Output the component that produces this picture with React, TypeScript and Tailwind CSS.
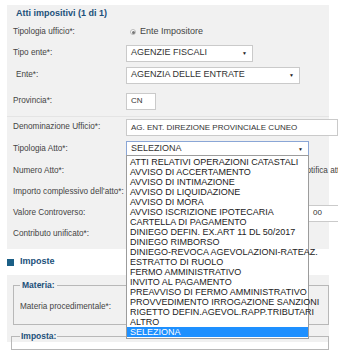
const tipologie = [
  'ATTI RELATIVI OPERAZIONI CATASTALI',
  'AVVISO DI ACCERTAMENTO',
  'AVVISO DI INTIMAZIONE',
  'AVVISO DI LIQUIDAZIONE',
  'AVVISO DI MORA',
  'AVVISO ISCRIZIONE IPOTECARIA',
  'CARTELLA DI PAGAMENTO',
  'DINIEGO DEFIN. EX.ART 11 DL 50/2017',
  'DINIEGO RIMBORSO',
  'DINIEGO-REVOCA AGEVOLAZIONI-RATEAZ.',
  'ESTRATTO DI RUOLO',
  'FERMO AMMINISTRATIVO',
  'INVITO AL PAGAMENTO',
  'PREAVVISO DI FERMO AMMINISTRATIVO',
  'PROVVEDIMENTO IRROGAZIONE SANZIONI',
  'RIGETTO DEFIN.AGEVOL.RAPP.TRIBUTARI',
  'ALTRO',
  'SELEZIONA',
]

function Row({
  label,
  h,
  children,
}: {
  label: string
  h: string
  children?: React.ReactNode
}) {
  return (
    <div className={`flex items-center whitespace-nowrap ${h}`}>
      <div className="w-[119px] shrink-0 pl-[6px]">{label}</div>
      {children}
    </div>
  )
}

function Select({ value, w, focus }: { value: string; w: string; focus?: boolean }) {
  return (
    <div
      className={`relative flex h-[17px] shrink-0 items-center border bg-white pl-[4px] text-[9px] text-[#333] ${w} ${
        focus ? 'border-[#8aa6d6]' : 'border-[#cacaca]'
      }`}
    >
      {value}
      <span className="absolute right-[5px] top-[5px] text-[5px] leading-none text-[#222]">▼</span>
    </div>
  )
}

function Input({ value, w }: { value?: string; w: string }) {
  return (
    <div
      className={`flex h-[17px] shrink-0 items-center border border-[#cacaca] bg-white pl-[4px] text-[8px] text-[#333] ${w}`}
    >
      {value}
    </div>
  )
}

export default function App() {
  return (
    <div className="relative h-[356px] w-[338px] overflow-hidden bg-white font-['Liberation_Sans',Arial,sans-serif] text-[8.2px] text-[#444]">
      <div className="ml-[7px] mt-[5px] w-[322px] bg-[#f1f1f1] pb-[5px]">
        <div className="flex h-[17px] items-center pl-[9px] text-[9px] font-bold text-[#21507a]">
          Atti impositivi (1 di 1)
        </div>
        <Row label="Tipologia ufficio*:" h="h-[20px]">
          <div className="ml-[4px] flex items-center gap-[4px] text-[9px]">
            <span className="flex h-[6px] w-[6px] items-center justify-center rounded-full border border-[#bbb] bg-white">
              <span className="h-[3px] w-[3px] rounded-full bg-[#777]" />
            </span>
            Ente Impositore
          </div>
        </Row>
        <Row label="Tipo ente*:" h="h-[22px]">
          <Select value="AGENZIE FISCALI" w="w-[127px]" />
        </Row>
        <Row label="" h="h-[22px]">
          <div className="absolute left-[16px]">Ente*:</div>
          <Select value="AGENZIA DELLE ENTRATE" w="w-[174px]" />
        </Row>
        <Row label="Provincia*:" h="h-[30px]">
          <Input value="CN" w="w-[30px]" />
        </Row>
        <div className="border-t border-[#e4e4e4]" />
        <Row label="Denominazione Ufficio*:" h="h-[21px]">
          <Input value="AG. ENT. DIREZIONE PROVINCIALE CUNEO" w="w-[212px]" />
        </Row>
        <Row label="Tipologia Atto*:" h="h-[22px]">
          <Select value="SELEZIONA" w="w-[183px]" focus />
        </Row>
        <Row label="Numero Atto*:" h="h-[22px]">
          <Input w="w-[100px]" />
          <div className="ml-[55px]">Data Notifica atto*:</div>
        </Row>
        <Row label="Importo complessivo dell'atto*:" h="h-[20px]">
          <Input w="w-[100px]" />
        </Row>
        <Row label="Valore Controverso:" h="h-[22px]">
          <Input w="w-[100px]" />
          <div className="ml-[82px] flex h-[17px] w-[40px] shrink-0 items-center border border-[#cacaca] bg-white pl-[4px] text-[8px] text-[#333]">
            00
          </div>
        </Row>
        <Row label="Contributo unificato*:" h="h-[20px]">
          <Input w="w-[100px]" />
        </Row>
      </div>

      <div className="flex h-[26px] items-center gap-[6px] pl-[7px] text-[9px] font-bold text-[#21507a]">
        <span className="h-[7px] w-[7px] bg-[#1b5f86]" />
        Imposte
      </div>

      <div className="ml-[7px] h-[67px] w-[322px] bg-[#f1f1f1] pt-[4px]">
        <fieldset className="ml-[6px] h-[46px] border border-[#b8b8b8] px-[6px]">
          <legend className="px-[2px] text-[8.5px] font-bold text-[#21507a]">Materia:</legend>
          <div className="pt-[9px]">Materia procedimentale*:</div>
        </fieldset>
        <fieldset className="ml-[4px] mt-[5px] h-[20px] border border-[#b8b8b8] px-[8px]">
          <legend className="px-[1px] text-[8.5px] font-bold text-[#21507a]">Imposta:</legend>
        </fieldset>
      </div>

      <div className="absolute left-[126px] top-[155px] w-[183px] border border-[#9c9c9c] bg-white py-[1px] text-[9px] text-[#222]">
        {tipologie.map((t, i) => (
          <div
            key={t}
            className={`h-[10px] whitespace-nowrap pl-[3px] leading-[10px] ${
              i === tipologie.length - 1 ? 'bg-[#1e90ff] text-white' : ''
            }`}
          >
            {t}
          </div>
        ))}
      </div>
    </div>
  )
}
